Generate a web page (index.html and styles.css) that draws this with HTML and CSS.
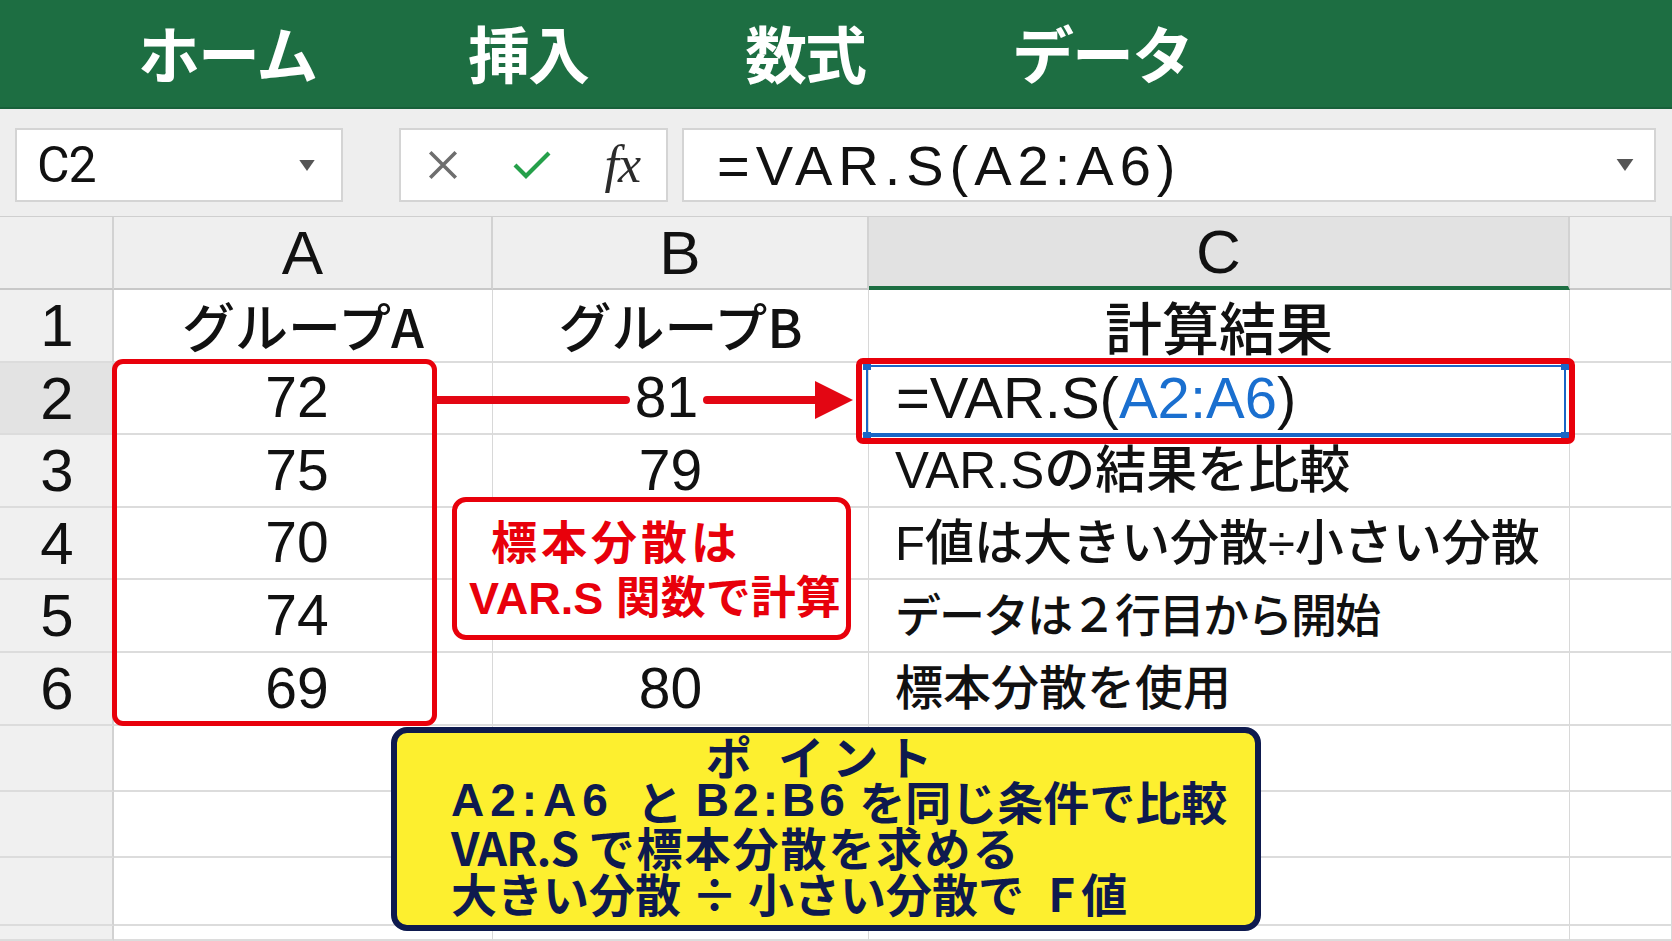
FILE: index.html
```html
<!DOCTYPE html>
<html lang="ja">
<head>
<meta charset="utf-8">
<title>VAR.S</title>
<link rel="stylesheet" href="styles.css">
</head>
<body>
<div class="app">
  <div class="ribbon">
    <span class="tab">ホーム</span>
    <span class="tab">挿入</span>
    <span class="tab">数式</span>
    <span class="tab">データ</span>
  </div>

  <div class="fbar">
    <div class="box namebox">
      <span class="name">C2</span>
      <svg class="tri" viewBox="0 0 14 10" width="16" height="11"><polygon points="0,0 14,0 7,10" fill="#555"/></svg>
    </div>
    <div class="box fxbox">
      <svg class="ic" viewBox="0 0 32 32" width="34" height="34"><path d="M4 4 L28 28 M28 4 L4 28" stroke="#6e6e6e" stroke-width="3.4" fill="none"/></svg>
      <svg class="ic" viewBox="0 0 40 32" width="40" height="32"><path d="M3 16 L14 27 L37 4" stroke="#25a04a" stroke-width="4.2" fill="none"/></svg>
      <span class="fx">fx</span>
    </div>
    <div class="box formula">
      <span class="ftext">=VAR.S(A2:A6)</span>
      <svg class="tri" viewBox="0 0 14 10" width="18" height="12"><polygon points="0,0 14,0 7,10" fill="#555"/></svg>
    </div>
  </div>

  <div class="sheet">
    <div class="grid">
      <div class="c hd corner"></div>
      <div class="c hd col">A</div>
      <div class="c hd col">B</div>
      <div class="c hd col sel">C</div>
      <div class="c hd"></div>

      <div class="c rh">1</div>
      <div class="c ctr jp">グループA</div>
      <div class="c ctr jp">グループB</div>
      <div class="c ctr jp big">計算結果</div>
      <div class="c"></div>

      <div class="c rh rsel">2</div>
      <div class="c ctr num na">72</div>
      <div class="c ctr num nb81">81</div>
      <div class="c left formula-cell">=VAR.S(<span class="ref">A2:A6</span>)</div>
      <div class="c"></div>

      <div class="c rh">3</div>
      <div class="c ctr num na">75</div>
      <div class="c ctr num nb">79</div>
      <div class="c left txt t3">VAR.Sの結果を比較</div>
      <div class="c"></div>

      <div class="c rh">4</div>
      <div class="c ctr num na">70</div>
      <div class="c ctr num nb"></div>
      <div class="c left txt t4">F値は大きい分散÷小さい分散</div>
      <div class="c"></div>

      <div class="c rh">5</div>
      <div class="c ctr num na">74</div>
      <div class="c ctr num nb"></div>
      <div class="c left txt t5">データは２行目から開始</div>
      <div class="c"></div>

      <div class="c rh">6</div>
      <div class="c ctr num na">69</div>
      <div class="c ctr num nb">80</div>
      <div class="c left txt t6">標本分散を使用</div>
      <div class="c"></div>

      <div class="c rh"></div><div class="c"></div><div class="c"></div><div class="c"></div><div class="c"></div>
      <div class="c rh"></div><div class="c"></div><div class="c"></div><div class="c"></div><div class="c"></div>
      <div class="c rh"></div><div class="c"></div><div class="c"></div><div class="c"></div><div class="c"></div>
      <div class="c rh"></div><div class="c"></div><div class="c"></div><div class="c"></div><div class="c"></div>
    </div>

    <div class="selbox">
      <i class="h h-tl"></i><i class="h h-tr"></i><i class="h h-bl"></i><i class="h h-br"></i>
    </div>
    <div class="redsel"></div>
    <div class="redA"></div>

    <svg class="arrow" viewBox="0 0 430 46" width="430" height="46">
      <path d="M6 23 H196 M277 23 H390" stroke="#e30613" stroke-width="8" stroke-linecap="round" fill="none"/>
      <polygon points="385,4 423,23 385,42" fill="#e30613"/>
    </svg>

    <div class="callout">
      <div class="cl1">標本分散は</div>
      <div class="cl2">VAR.S 関数で計算</div>
    </div>

    <div class="point">
      <div class="pt-title">ポ イント</div>
      <div class="pt-line"><span class="lat la">A2:A6</span> <span class="ib">と</span> <span class="lat lb">B2:B6</span> <span class="ib">を同じ条件で比較</span></div>
      <div class="pt-line"><span class="ib lat2">VAR.S</span> <span class="ib wide">で標本分散を求める</span></div>
      <div class="pt-line"><span class="ib">大きい分散</span> <span class="ib">÷</span> <span class="ib">小さい分散で</span> <span class="ib fv">F値</span></div>
    </div>
  </div>
</div>
</body>
</html>
```

FILE: styles.css
```css
* { box-sizing: border-box; }

html, body {
  margin: 0;
  padding: 0;
}

body {
  width: 1672px;
  height: 941px;
  overflow: hidden;
  background: #ffffff;
  font-family: "Liberation Sans", "Noto Sans CJK JP", sans-serif;
  color: #111;
}

.app {
  width: 1672px;
  height: 941px;
  display: flex;
  flex-direction: column;
}

/* ribbon */
.ribbon {
  height: 109px;
  background: #1d6e42;
  border-bottom: 2px solid #18603a;
  display: grid;
  grid-template-columns: 330px 277px 267px auto;
  align-items: center;
  padding-left: 138px;
  padding-bottom: 4px;
}

.tab {
  font-family: "Noto Sans CJK JP", sans-serif;
  font-weight: 700;
  font-size: 62px;
  line-height: 1;
  color: #ffffff;
  letter-spacing: -2px;
}

/* formula bar */
.fbar {
  height: 108px;
  background: #eeeeee;
  display: flex;
  align-items: flex-start;
  padding: 19px 0 0 15px;
  border-bottom: 1px solid #cfcfcf;
}

.box {
  height: 74px;
  background: #ffffff;
  border: 2px solid #d4d4d4;
  display: flex;
  align-items: center;
}

.namebox {
  width: 328px;
  padding: 0 26px 0 20px;
  justify-content: space-between;
}

.name {
  font-family: "Roboto", "Liberation Sans", sans-serif;
  font-size: 50px;
  color: #111;
  letter-spacing: -1px;
}

.fxbox {
  width: 269px;
  margin-left: 56px;
  padding: 0 26px 0 25px;
  justify-content: space-between;
}

.fx {
  font-family: "Liberation Serif", serif;
  font-style: italic;
  font-size: 52px;
  line-height: 1;
  color: #2b2b2b;
  letter-spacing: -1px;
}

.formula {
  width: 974px;
  margin-left: 14px;
  padding: 0 20px 0 33px;
  justify-content: space-between;
}

.ftext {
  font-family: "Liberation Sans", sans-serif;
  font-size: 56px;
  letter-spacing: 6px;
  color: #111;
}

/* sheet */
.sheet {
  position: relative;
  flex: 1;
}

.grid {
  display: grid;
  grid-template-columns: 114px 379px 376px 701px 1fr;
  grid-template-rows: 73px 73px 72px 73px 72px 73px 73px 66px 66px 68px 1fr;
  height: 100%;
}

.c {
  border-right: 1px solid #d8d8d8;
  border-bottom: 2px solid #dcdcdc;
  display: flex;
  align-items: center;
  white-space: nowrap;
  background: #ffffff;
  line-height: 1.15;
  min-width: 0;
}

.hd {
  background: #efefef;
  border-right: 2px solid #d2d2d2;
  border-bottom: 2px solid #c8c8c8;
  justify-content: center;
  font-size: 62px;
  color: #111;
}

.hd.sel {
  background: #e2e2e2;
  border-bottom: 4px solid #1d6e42;
}

.rh {
  background: #f0f0f0;
  border-right: 2px solid #d2d2d2;
  justify-content: center;
  font-size: 60px;
  padding-left: 2px;
}

.rh.rsel {
  background: #e3e3e3;
}

.ctr {
  justify-content: center;
}

.left {
  padding-left: 26px;
}

.num {
  font-size: 57px;
}

.na { padding-right: 12px; }
.nb { padding-right: 20px; }
.nb81 { padding-right: 28px; }

.jp {
  font-family: "Noto Sans CJK JP", sans-serif;
  font-size: 53px;
  font-weight: 500;
  line-height: 1;
}

.jp.big {
  font-size: 57px;
}

.txt {
  font-weight: 500;
  line-height: 1;
}

.t3 { font-size: 51px; }
.t4 { font-size: 49px; }
.t5 { font-size: 46px; letter-spacing: -2px; }
.t6 { font-size: 48px; }

.formula-cell {
  font-size: 58px;
  padding-left: 27px;
}

.ref {
  color: #1a6fcf;
}

/* overlays */
.redA {
  position: absolute;
  left: 112px;
  top: 142px;
  width: 325px;
  height: 367px;
  border: 5px solid #e8000b;
  border-radius: 11px;
}

.redsel {
  position: absolute;
  left: 856px;
  top: 141px;
  width: 719px;
  height: 86px;
  border: 6px solid #e8000b;
  border-radius: 7px;
}

.selbox {
  position: absolute;
  left: 866px;
  top: 148px;
  width: 700px;
  height: 72px;
  border: 2px solid #1a66c6;
  border-bottom-width: 4px;
}

.h {
  position: absolute;
  width: 8px;
  height: 8px;
  background: #1a66c6;
}
.h-tl { left: -5px; top: -5px; }
.h-tr { right: -5px; top: -5px; }
.h-bl { left: -5px; bottom: -7px; }
.h-br { right: -5px; bottom: -7px; }

.arrow {
  position: absolute;
  left: 430px;
  top: 160px;
}

.callout {
  position: absolute;
  left: 452px;
  top: 280px;
  width: 399px;
  height: 143px;
  background: #ffffff;
  border: 5px solid #e8000b;
  border-radius: 14px;
  color: #e8000b;
  font-family: "Liberation Sans", "Noto Sans CJK JP", sans-serif;
  font-weight: 700;
  display: flex;
  flex-direction: column;
  padding: 8px 0 0 12px;
}

.cl1 {
  font-family: "Noto Sans CJK JP", sans-serif;
  font-size: 46px;
  line-height: 59px;
  padding-left: 22px;
  letter-spacing: 4px;
}

.cl2 {
  font-size: 45px;
  line-height: 59px;
  white-space: nowrap;
}

.point {
  position: absolute;
  left: 391px;
  top: 510px;
  width: 870px;
  height: 204px;
  background: #fdef2f;
  border: 6px solid #0e1a4e;
  border-radius: 16px;
  color: #0e1a4e;
  font-family: "Noto Sans CJK JP", sans-serif;
  font-weight: 700;
  padding: 0 0 0 54px;
}

.pt-title {
  font-size: 46px;
  line-height: 45px;
  height: 45px;
  text-align: center;
  padding-right: 60px;
  letter-spacing: 8px;
}

.pt-line {
  font-size: 46px;
  line-height: 45px;
  height: 46px;
  white-space: nowrap;
}

.ib {
  display: inline-block;
  line-height: 45px;
  height: 45px;
  vertical-align: top;
}

.wide {
  letter-spacing: 2px;
}

.fv {
  margin-left: 14px;
  letter-spacing: 6px;
}

.lat {
  display: inline-block;
  line-height: 45px;
  height: 45px;
  vertical-align: top;
  font-family: "Liberation Sans", sans-serif;
}

.la {
  letter-spacing: 6px;
  margin-right: 12px;
}

.lb {
  letter-spacing: 4px;
  margin-left: 3px;
}

.lat2 {
  letter-spacing: -1px;
}
```
